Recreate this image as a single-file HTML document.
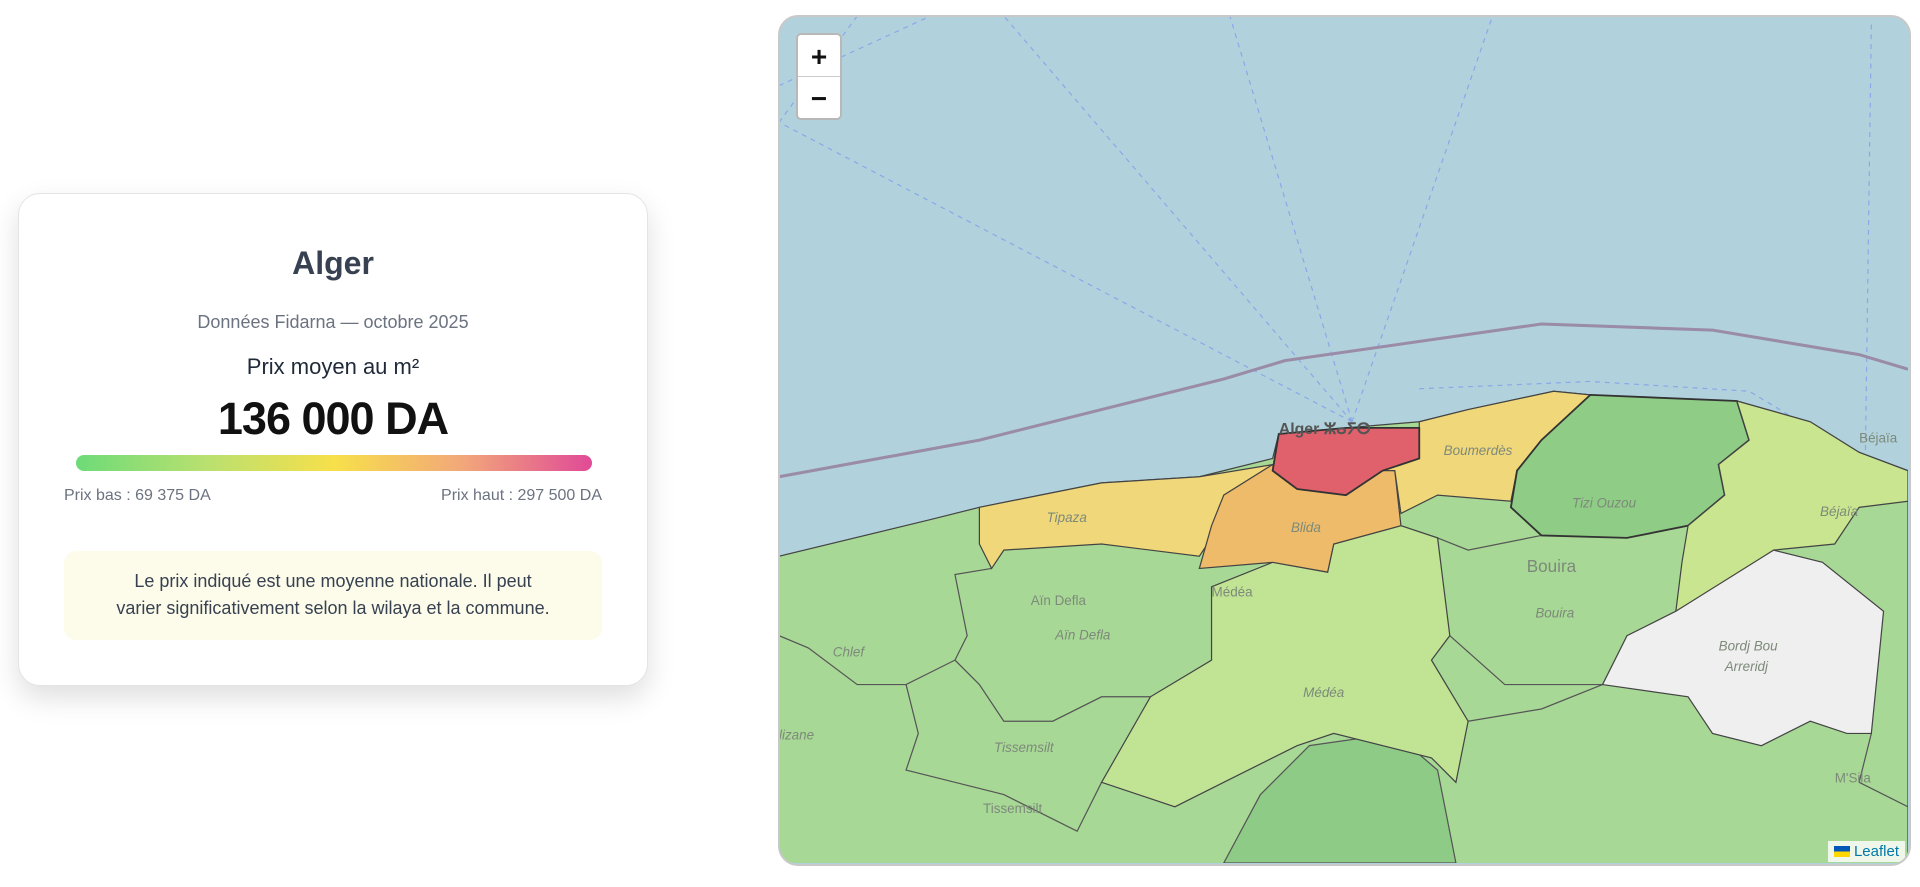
<!DOCTYPE html>
<html><head><meta charset="utf-8"><style>
body{margin:0;width:1920px;height:887px;background:#fff;font-family:"Liberation Sans",sans-serif;position:relative;overflow:hidden}
.card{position:absolute;left:18px;top:193px;width:628px;height:491px;border:1px solid #e2e4e8;border-radius:22px;background:#fff;box-shadow:0 12px 28px rgba(0,0,0,.13);text-align:center;color:#374151}
.t{position:absolute;left:0;right:0}
.map{position:absolute;left:778px;top:15px;width:1129px;height:847px;border:2px solid #c8c8c8;border-radius:20px;overflow:hidden;background:#b1d2dc}
.zb{position:absolute;left:16px;top:16px;width:42px;border:2px solid #b8b8b8;border-radius:5px;background:#fff}
.zb div{height:41px;position:relative;font:bold 28px "Liberation Sans",sans-serif;color:#111}
.zb span{position:absolute;left:0;right:0;top:8px;text-align:center;line-height:28px}
.attr{position:absolute;right:4px;bottom:2px;background:rgba(255,255,255,.8);font-size:15px;color:#0078a8;padding:2px 6px}
</style></head><body>
<div class="card">
<div class="t" style="top:51px;font-size:32px;font-weight:bold">Alger</div>
<div class="t" style="top:118px;font-size:18px;color:#6b7280">Données Fidarna — octobre 2025</div>
<div class="t" style="top:160px;font-size:22px;color:#1f2937">Prix moyen au m²</div>
<div class="t" style="top:199px;font-size:45px;font-weight:bold;color:#111;letter-spacing:-1px">136 000 DA</div>
<div style="position:absolute;left:57px;top:261px;width:516px;height:16px;border-radius:8px;background:linear-gradient(90deg,#6ddb78,#b8e070 25%,#f7e04a 50%,#f2a77a 75%,#e04a97)"></div>
<div style="position:absolute;left:45px;top:293px;font-size:16px;color:#6b7280">Prix bas : 69 375 DA</div>
<div style="position:absolute;right:45px;top:293px;font-size:16px;color:#6b7280">Prix haut : 297 500 DA</div>
<div style="position:absolute;left:45px;top:357px;width:538px;height:89px;border-radius:12px;background:#fdfcea;font-size:18px;line-height:27px;color:#374151;padding-top:17px;box-sizing:border-box">Le prix indiqué est une moyenne nationale. Il peut<br>varier significativement selon la wilaya et la commune.</div>
</div>
<div class="map">
<svg width="1129" height="847" viewBox="636 13 924 693" preserveAspectRatio="none" style="position:absolute;left:-1px;top:-1px">
<g stroke="#8aa8e8" stroke-width="1" stroke-dasharray="4,4" fill="none">
<path d="M1105 345 L1005 13 M1105 345 L1220 13 M1105 345 L636 100 M1105 345 L820 13 M636 100 L700 13 M636 70 L760 13 M1530 20 L1525 380 M1160 318 L1300 312 L1430 320 L1530 380"/>
</g>
<path d="M636 390 L800 360 L1000 310 L1050 295 L1260 265 L1400 270 L1520 290 L1560 302" stroke="#9a8ca8" stroke-width="2.5" fill="none"/>
<path d="M636 455 L760 425 L800 415 L900 395 L980 390 L1040 375 L1045 355 L1100 350 L1160 345 L1200 335 L1270 320 L1300 323 L1420 328 L1480 345 L1520 370 L1560 385 L1560 710 L636 710Z" fill="#a8d896" stroke="#444" stroke-width="1"/>
<path d="M1070 610 L1140 600 L1175 630 L1190 706 L1000 706 L1030 650Z" fill="#8ecb86" stroke="#555" stroke-width="1"/>
<g stroke="#555" stroke-width="1" fill="none">
<path d="M810 465 L780 470 L790 520 L780 540 L800 560 L820 590 L860 590 L900 570 L940 570"/>
<path d="M636 520 L660 530 L700 560 L740 560 L780 540"/>
<path d="M740 560 L750 600 L740 630 L780 640 L820 650 L880 680 L900 640"/>
<path d="M1175 440 L1200 450 L1260 438 M1185 520 L1230 560 L1280 560 L1310 560 M1200 590 L1260 580 L1310 560"/>
<path d="M1530 600 L1520 640 L1560 660"/>
</g>
<path d="M990 480 L1040 460 L1085 468 L1090 445 L1145 430 L1175 440 L1185 520 L1170 540 L1200 590 L1190 640 L1170 620 L1090 600 L1060 610 L1000 640 L960 660 L900 640 L940 570 L990 540Z" fill="#c0e394" stroke="#444" stroke-width="1"/>
<path d="M800 415 L900 395 L980 390 L1040 380 L1000 405 L990 440 L980 455 L900 445 L820 450 L810 465 L800 445Z" fill="#f0d77a" stroke="#444" stroke-width="1"/>
<path d="M1040 380 L1140 385 L1145 430 L1090 445 L1085 468 L1040 460 L980 465 L990 430 L1000 405Z" fill="#eebb6a" stroke="#444" stroke-width="1"/>
<path d="M1160 345 L1200 335 L1270 320 L1300 323 L1260 360 L1240 385 L1235 410 L1175 405 L1145 420 L1140 385 L1130 385 L1160 375Z" fill="#f0d77a" stroke="#444" stroke-width="1"/>
<path d="M1045 355 L1100 350 L1160 350 L1160 375 L1130 385 L1100 405 L1060 400 L1040 385Z" fill="#e0616b" stroke="#333" stroke-width="1.5"/>
<path d="M1300 323 L1420 328 L1430 360 L1405 380 L1410 405 L1380 430 L1330 440 L1260 438 L1235 415 L1240 385 L1260 360Z" fill="#8fcc85" stroke="#333" stroke-width="1.5"/>
<path d="M1420 328 L1480 345 L1520 370 L1560 385 L1560 410 L1520 415 L1500 445 L1450 450 L1420 470 L1370 500 L1375 460 L1380 430 L1410 405 L1405 380 L1430 360Z" fill="#c9e58f" stroke="#444" stroke-width="1"/>
<path d="M1450 450 L1490 460 L1540 500 L1530 600 L1510 600 L1480 590 L1440 610 L1400 600 L1380 570 L1310 560 L1330 520 L1370 500Z" fill="#efefef" stroke="#444" stroke-width="1"/>
<g font-family="Liberation Sans,sans-serif" font-size="11" fill="#7d8a7a" font-style="italic">
<text x="1045" y="355" font-size="13" font-weight="bold" font-style="normal" fill="#555">Alger ⵣⴰⵢⵔ</text>
<text x="1180" y="372">Boumerdès</text><text x="1285" y="415">Tizi Ouzou</text><text x="1488" y="422">Béjaïa</text>
<text x="1520" y="362" font-style="normal">Béjaïa</text><text x="1248" y="468" font-size="14" font-style="normal">Bouira</text>
<text x="1255" y="505">Bouira</text><text x="1055" y="435">Blida</text><text x="855" y="427">Tipaza</text>
<text x="990" y="488" font-style="normal">Médéa</text><text x="1065" y="570">Médéa</text><text x="842" y="495" font-style="normal">Aïn Defla</text>
<text x="862" y="523">Aïn Defla</text><text x="680" y="537">Chlef</text><text x="812" y="615">Tissemsilt</text><text x="803" y="665" font-style="normal">Tissemsilt</text>
<text x="1405" y="532">Bordj Bou</text><text x="1410" y="549">Arreridj</text><text x="1500" y="640" font-style="normal">M'Sila</text><text x="636" y="605">lizane</text>
</g>
</svg>
<div class="zb"><div style="border-bottom:1px solid #ccc"><span>+</span></div><div><span>−</span></div></div>
<div class="attr"><span style="display:inline-block;width:16px;height:11px;background:linear-gradient(#0057b7 50%,#ffd700 50%);vertical-align:-1px;margin-right:4px"></span>Leaflet</div>
</div>
</body></html>
